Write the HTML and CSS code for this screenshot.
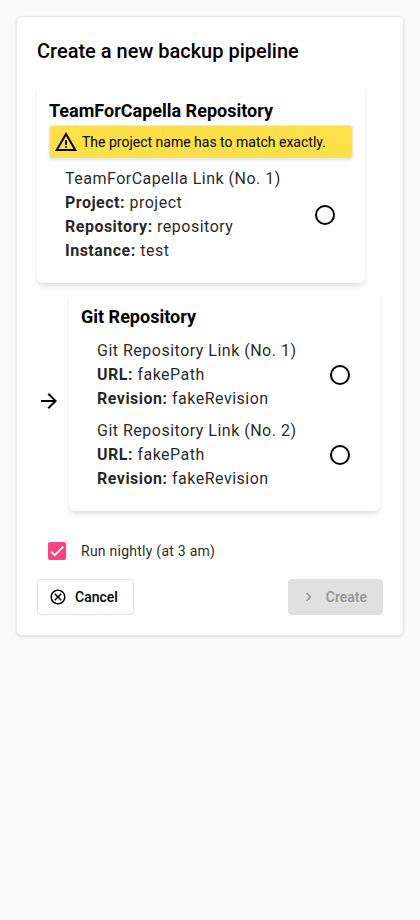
FILE: index.html
```html
<!DOCTYPE html>
<html lang="en">
<head>
<meta charset="utf-8">
<title>Create a new backup pipeline</title>
<link rel="stylesheet" href="styles.css">
</head>
<body>
<main class="dialog">
  <h1 class="title">Create a new backup pipeline</h1>
  <section class="panel panel-team">
    <h2 class="panel-title">TeamForCapella Repository</h2>
    <div class="warning">
      <svg class="icon" viewBox="0 0 24 24"><path d="M1 21 12 2l11 19zm3.45-2h15.1L12 6zM12 18a1 1 0 0 0 0-2 1 1 0 0 0 0 2zm-1-3h2v-5h-2z" fill-rule="evenodd"/></svg>
      <span>The project name has to match exactly.</span>
    </div>
    <div class="list">
      <label class="option">
        <span class="lines">TeamForCapella Link (No. 1)<br><b>Project:</b> project<br><b>Repository:</b> repository<br><b>Instance:</b> test</span>
        <span class="radio"></span>
      </label>
    </div>
  </section>
  <div class="target">
    <svg class="icon" viewBox="0 0 24 24"><path d="m12 20-1.425-1.4 5.6-5.6H4v-2h12.175l-5.6-5.6L12 4l8 8z"/></svg>
    <section class="panel panel-git">
      <h2 class="panel-title">Git Repository</h2>
      <div class="list">
        <label class="option">
          <span class="lines">Git Repository Link (No. 1)<br><b>URL:</b> fakePath<br><b>Revision:</b> fakeRevision</span>
          <span class="radio"></span>
        </label>
        <label class="option">
          <span class="lines">Git Repository Link (No. 2)<br><b>URL:</b> fakePath<br><b>Revision:</b> fakeRevision</span>
          <span class="radio"></span>
        </label>
      </div>
    </section>
  </div>
  <label class="nightly">
    <span class="checkbox"><svg viewBox="0 0 24 24"><path d="M1.73 12.91 8.1 19.28 22.79 4.59"/></svg></span>
    <span>Run nightly (at 3 am)</span>
  </label>
  <div class="actions">
    <button class="button cancel">
      <svg class="button-icon" viewBox="0 0 24 24"><path d="m8.4 17 3.6-3.6 3.6 3.6 1.4-1.4-3.6-3.6L17 8.4 15.6 7 12 10.6 8.4 7 7 8.4l3.6 3.6L7 15.6zM12 2C6.47 2 2 6.47 2 12s4.47 10 10 10 10-4.47 10-10S17.53 2 12 2zm0 18c-4.41 0-8-3.59-8-8s3.59-8 8-8 8 3.59 8 8-3.59 8-8 8z" fill-rule="evenodd"/></svg>
      Cancel
    </button>
    <button class="button create" disabled>
      <svg class="button-icon" viewBox="0 0 24 24"><path d="M12.6 12 8 7.4 9.4 6l6 6-6 6L8 16.6z"/></svg>
      Create
    </button>
  </div>
</main>
</body>
</html>
```
FILE: styles.css
```css
* { box-sizing: border-box; }
body {
  margin: 0;
  padding: 16px;
  background: #fafafa;
  color: #000;
  font-family: Roboto, sans-serif;
}
.dialog {
  height: 620px;
  padding: 20px;
  border: 1px solid #e5e7eb;
  border-radius: 6px;
  background: #fff;
  box-shadow: 0 1px 3px rgba(0,0,0,.1), 0 1px 2px -1px rgba(0,0,0,.1);
}
.title { margin: 0 0 20px; font-size: 20px; font-weight: 500; line-height: 28px; }
.panel {
  padding: 12px;
  border-radius: 6px;
  box-shadow: 0 4px 6px -1px rgba(0,0,0,.1), 0 2px 4px -2px rgba(0,0,0,.1);
}
.panel-team { width: 328px; height: 198px; }
.panel-git { width: 311px; height: 220px; }
.panel-title { margin: 0; font-size: 18px; font-weight: 700; line-height: 28px; }
.icon { width: 24px; height: 24px; flex: none; }
.warning {
  display: flex;
  align-items: center;
  gap: 4px;
  height: 34px;
  padding: 4px;
  border: 1px solid #e5e7eb;
  border-radius: 4px;
  background: #fddf47;
  font-size: 14px;
  line-height: 20px;
  box-shadow: 0 1px 3px rgba(0,0,0,.1), 0 1px 2px -1px rgba(0,0,0,.1);
}
.list { display: flex; flex-direction: column; gap: 8px; padding: 8px 16px; }
.option { display: flex; align-items: center; justify-content: space-between; }
.lines { font-size: 16px; line-height: 24px; letter-spacing: .496px; color: rgba(0,0,0,.87); }
.radio { flex: none; width: 20px; height: 20px; margin-right: 2px; border: 2px solid #000; border-radius: 50%; }
.target { display: flex; align-items: center; gap: 8px; margin-top: 8px; }
.nightly {
  display: flex;
  align-items: center;
  gap: 15px;
  height: 40px;
  margin-top: 20px;
  padding-left: 11px;
  font-size: 14px;
  letter-spacing: .25px;
  color: rgba(0,0,0,.87);
}
.checkbox { display: flex; width: 18px; height: 18px; padding: 2px; border-radius: 2px; background: #ff4081; }
.checkbox svg { width: 14px; height: 14px; fill: none; stroke: #fff; stroke-width: 3.12; }
.actions { display: flex; justify-content: space-between; margin-top: 8px; }
.button {
  display: flex;
  align-items: center;
  gap: 8px;
  height: 36px;
  padding: 0 15px 0 11px;
  border: 1px solid #e0e0e0;
  border-radius: 4px;
  background: #fff;
  color: #000;
  font: 500 14px/20px Roboto, sans-serif;
}
.button-icon { width: 18px; height: 18px; fill: currentColor; }
.create { border-color: #e0e0e0; background: #e0e0e0; color: #949494; }
```
